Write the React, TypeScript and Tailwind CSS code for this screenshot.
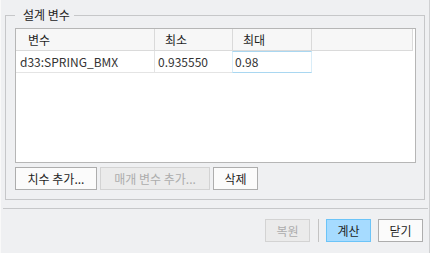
import React from 'react';

// 버튼 공통
function Btn({ label, w, kind = 'normal' }: { label: string; w: string; kind?: 'normal' | 'disabled' | 'primary' }) {
  const tone =
    kind === 'disabled'
      ? 'bg-[#ebebeb] border-[#d3d3d3] text-[#adadad]'
      : kind === 'primary'
      ? 'bg-[#a6dbff] border-[#6cc4f8] text-[#1e1e1e]'
      : 'bg-[#fbfbfb] border-[#adadad] text-[#1e1e1e]';
  return (
    <div className={`${w} h-[23px] border flex items-center justify-center text-[12px] leading-none ${tone}`}>
      {label}
    </div>
  );
}

export default function App() {
  return (
    <div className="w-[430px] h-[253px] bg-[#eff0f2] border-r border-r-[#cfd0d2] border-l border-l-[#f9f9f9] font-['Noto_Sans_CJK_KR',sans-serif] text-[#1e1e1e] flex flex-col">
      {/* 그룹 박스 */}
      <div className="relative ml-[4px] mt-[15px] w-[420px] h-[185px] border border-[#c6c7c9] pl-[9px] pt-[12px]">
        <div className="absolute left-[9px] top-[-9px] pl-[8px] pr-[4px] bg-[#eff0f2] text-[12px] leading-[16px] text-[#222]">
          설계 변수
        </div>

        {/* 표 */}
        <div className="w-[401px] h-[135px] border border-[#b6b6b6] bg-white">
          <div className="flex h-[22px]">
            <div className="w-[139px] border-r border-b border-[#dadada] bg-[#f7f7f7] pl-[12px] text-[12px] leading-[21px]">변수</div>
            <div className="w-[78px] border-r border-b border-[#dadada] bg-[#f7f7f7] pl-[10px] text-[12px] leading-[21px]">최소</div>
            <div className="w-[79px] border-r border-b border-[#dadada] bg-[#f7f7f7] pl-[10px] text-[12px] leading-[21px]">최대</div>
            <div className="w-[101px] border-r border-b border-[#dadada] bg-[#f7f7f7]" />
          </div>
          <div className="flex h-[22px] text-[12px] text-[#333]">
            <div className="w-[139px] border-r border-b border-[#e4e4e4] pl-[4px] leading-[21px]">d33:SPRING_BMX</div>
            <div className="w-[77px] border-b border-[#e4e4e4] pl-[3px] leading-[21px]">0.935550</div>
            <div className="w-[80px] border-y border-y-[#a9d7f1] border-x border-x-[#d9edf8] pl-[2px] leading-[20px]">0.98</div>
          </div>
        </div>

        <div className="flex gap-[3px] mt-[4px]">
          <Btn label="치수 추가..." w="w-[82px]" />
          <Btn label="매개 변수 추가..." w="w-[110px]" kind="disabled" />
          <Btn label="삭제" w="w-[45px]" />
        </div>
      </div>

      {/* 구분선 */}
      <div className="ml-[2px] mt-[8px] w-[425px] h-px bg-[#c6c7c9]" />

      <div className="flex justify-end items-center mt-[10px] pr-[6px]">
        <Btn label="복원" w="w-[45px]" kind="disabled" />
        <div className="ml-[8px] w-px h-[23px] bg-[#c3c3c3]" />
        <div className="ml-[7px]">
          <Btn label="계산" w="w-[45px]" kind="primary" />
        </div>
        <div className="ml-[7px]">
          <Btn label="닫기" w="w-[45px]" />
        </div>
      </div>
    </div>
  );
}
